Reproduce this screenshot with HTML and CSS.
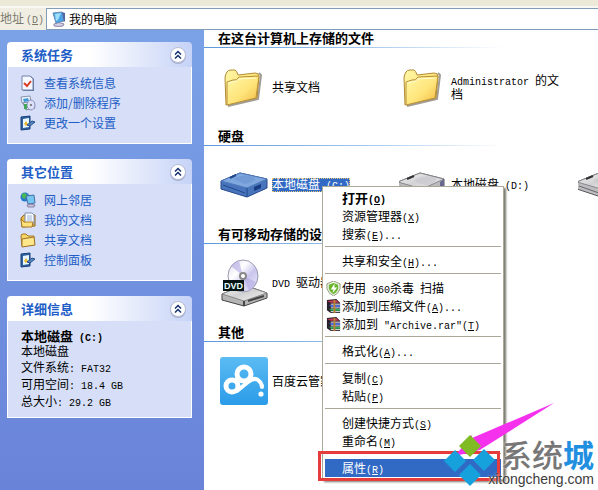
FILE: index.html
```html
<!DOCTYPE html>
<html lang="zh-CN">
<head>
<meta charset="utf-8">
<title>我的电脑</title>
<link rel="stylesheet" href="styles.css">
</head>
<body>
<svg class="defs" aria-hidden="true">
  <defs>
    <linearGradient id="gold" x1="0" y1="0" x2="1" y2="1"><stop offset="0" stop-color="#fff8a8"/><stop offset=".55" stop-color="#ffe47a"/><stop offset="1" stop-color="#f0b63c"/></linearGradient>
    <linearGradient id="steel" x1="0" y1="0" x2="1" y2="1"><stop offset="0" stop-color="#f4f4f4"/><stop offset=".5" stop-color="#d2d2d4"/><stop offset="1" stop-color="#f2f2f2"/></linearGradient>
    <linearGradient id="disc" x1="0" y1="0" x2="1" y2="1"><stop offset="0" stop-color="#d9d9ee"/><stop offset=".35" stop-color="#fff"/><stop offset=".6" stop-color="#c9c6ee"/><stop offset="1" stop-color="#eeeef8"/></linearGradient>
    <linearGradient id="sky" x1="0" y1="0" x2="0" y2="1"><stop offset="0" stop-color="#5bbcf3"/><stop offset="1" stop-color="#2b9be8"/></linearGradient>
    <symbol id="folder" viewBox="0 0 48 48">
      <path d="M8 43 38 36 41 12 39 10" fill="none" stroke="#77736a" stroke-width="2" opacity=".7"/>
      <path d="M5 15Q5 12 7 9Q8 7 11 7L15 7Q17 8 18 12L35 10Q39 10 39 13L37 35 6 42Z" fill="url(#gold)" stroke="#b28b35"/>
      <path d="M7 19 13 17Q17 18 19 14L39 13 36 35 7 42Z" fill="url(#gold)" stroke="#b79038"/>
      <path d="M8 20 13 19Q17 19 19 16L36 15" fill="none" stroke="#fffbd0"/>
    </symbol>
    <symbol id="disk" viewBox="0 0 48 48">
      <path d="M-1 21 21 12 45 18 45 27 23 36 -1 28Z" fill="#bcbcbe" stroke="#58585c"/>
      <path d="M-1 21 21 12 45 18 23 28Z" fill="url(#steel)" stroke="#88888c"/>
      <path d="M15 20Q23 13 36 17Q40 20 28 25" fill="#c9c9ce" opacity=".7"/>
      <path d="M23 28V36M1 25 21 32M26 32 42 25" stroke="#68686e" fill="none"/>
      <path d="M8 18 15 15" stroke="#333" stroke-width="2"/>
      <path d="M41 21 45 18V26L41 28Z" fill="#67678f"/>
    </symbol>
    <symbol id="disk-blue" viewBox="0 0 48 48">
      <path d="M1 20 20 12 47 18 47 27 27 36 1 28Z" fill="#4774bb" stroke="#24488c"/>
      <path d="M1 20 20 12 47 18 27 27Z" fill="#80a8df" stroke="#4f78b8"/>
      <path d="M13 18Q23 12 34 16Q38 20 25 23Z" fill="#739bd6"/>
      <path d="M27 27V36M3 24 25 32" stroke="#23498e" fill="none"/>
      <path d="M34 26 41 23V27L34 30Z" fill="#183c82"/><path d="M10 17 16 14" stroke="#24488c" stroke-width="2"/>
    </symbol>
    <symbol id="dvd" viewBox="0 0 48 48">
      <path d="M2 35 24 26 47 34 47 39 24 47 2 41Z" fill="#b5b5b5" stroke="#444"/>
      <path d="M2 35 24 26 47 34 24 42Z" fill="url(#steel)" stroke="#888"/>
      <path d="M24 42V47M28 42 44 37" stroke="#444" stroke-width="2"/>
      <ellipse cx="23" cy="17" rx="15" ry="16" fill="url(#disc)" stroke="#9a9ab0"/>
      <path d="M23 17 11 7Q14 3 19 2ZM23 17 36 23Q34 29 29 32Z" fill="#b3a8e2" opacity=".6"/>
      <circle cx="23" cy="17" r="4" fill="#888"/><circle cx="23" cy="17" r="2" fill="#fff"/>
      <path d="M3 21H24V32H3Z" fill="#061414"/>
      <text x="4" y="30" class="dvd-text" fill="#e8ffff">DVD</text>
    </symbol>
    <symbol id="baidu" viewBox="0 0 48 48">
      <rect width="48" height="48" rx="3" fill="url(#sky)"/>
      <g fill="none" stroke="#fff"><circle cx="24" cy="17" r="7" stroke-width="5"/><circle cx="12" cy="29" r="6" stroke-width="5"/><path d="M17 34 28 25Q34 20 38 23Q42 26 42 30" stroke-width="4" stroke-linecap="round"/></g>
      <circle cx="41" cy="37" r="2.600" fill="#fff"/>
    </symbol>
    <symbol id="chevrons" viewBox="0 0 18 18">
      <circle cx="9" cy="10" r="8" fill="#8288a8" opacity=".5"/>
      <circle cx="9" cy="9" r="7.500" fill="#fff" stroke="#b8bdd6"/>
      <path d="M6 8.500 9 5.500 12 8.500M6 12.500 9 9.500 12 12.500" fill="none" stroke="#15306e" stroke-width="1.500"/>
    </symbol>
    <symbol id="computer" viewBox="0 0 16 16">
      <path d="M3 13Q8 10 13 13L12 15Q8 16 3 15Z" fill="#d5cfe4" stroke="#8b8aa6"/>
      <path d="M2 2 11 1 13 10 5 12Z" fill="#4aa5e6" stroke="#6b8cb8"/><path d="M4 3 10 2 7 9 5 10Z" fill="#9fe0fb"/><path d="M11 1 14 2V10L13 11Z" fill="#4d67a0"/>
    </symbol>
    <symbol id="doc-check" viewBox="0 0 16 16">
      <path d="M3 1H11L14 4V16H3Z" fill="#68779a"/><path d="M2 1H10L13 4V15H2Z" fill="#f6f9ff" stroke="#7184ad"/>
      <path d="M4 8 7 11 11 6" fill="none" stroke="#db3b20" stroke-width="2"/>
    </symbol>
    <symbol id="programs" viewBox="0 0 16 16">
      <path d="M1 2 10 1 11 7 2 8Z" fill="#edf2fa" stroke="#8793ad"/><path d="M3 4 8 3 9 6 4 7Z" fill="#3d9bd9"/>
      <path d="M3 8 12 6 15 13 6 15Z" fill="#eee" stroke="#7c89a5"/>
      <ellipse cx="11" cy="10" rx="4" ry="5" fill="#dcdff9" stroke="#8a8dbb"/><circle cx="11" cy="10" r="1" fill="#666"/><path d="M4 9H7V14H4Z" fill="#40a856"/>
    </symbol>
    <symbol id="panel" viewBox="0 0 16 16">
      <path d="M1 2 10 1V14L1 15Z" fill="#2f629f" stroke="#183f78"/><path d="M3 4 9 3V12L3 13Z" fill="#e8f7ff"/>
      <path d="M4 9 6 6 8 9 6 11Z" fill="#e9b829"/><path d="M7 10 12 6 15 7 10 11Z" fill="#5686bf" stroke="#244f89"/>
    </symbol>
    <symbol id="network" viewBox="0 0 16 16">
      <circle cx="5" cy="5" r="4.500" fill="#2878ce"/><path d="M2 2Q6 0 7 3L5 7Q1 6 2 2Z" fill="#49b950"/>
      <path d="M6 4 14 3 15 11 8 12Z" fill="#76c6f2" stroke="#4870a5"/><path d="M7 13Q11 11 15 13L14 15H8Z" fill="#cbc3df" stroke="#8580a2"/>
    </symbol>
    <symbol id="documents" viewBox="0 0 16 16">
      <path d="M1 6 4 3H15V14L2 15Z" fill="#e7b94a" stroke="#94651b"/><path d="M5 1H12L14 3V12H5Z" fill="#f8fbff" stroke="#7c91b2"/><path d="M7 4H12M7 6H12M7 8H12" stroke="#9cb4d5"/>
      <path d="M1 7 4 10H13L12 15H2Z" fill="#ffe07a" stroke="#a97a26"/>
    </symbol>
    <symbol id="small-folder" viewBox="0 0 16 16">
      <path d="M1 4Q1 2 3 2H6L8 4H14V13L2 14Z" fill="#f6d568" stroke="#a87922"/><path d="M2 7 14 5 15 13 2 15Z" fill="#ffe88a" stroke="#9c712a"/>
    </symbol>
    <symbol id="shield" viewBox="0 0 16 16">
      <path d="M8 0 15 3V8Q14 13 8 16Q2 13 1 8V3Z" fill="#f1f4ea" stroke="#899875"/><path d="M8 2 13 4V8Q12 12 8 14Q4 12 3 8V4Z" fill="#69b52d"/><path d="M9 3 5 9H8L7 13 12 7H9Z" fill="#fff"/>
    </symbol>
    <symbol id="rar" viewBox="0 0 16 16">
      <path d="M1 1 11 0 15 4V15H5L1 12Z" fill="#271e28"/>
      <path d="M1 2 11 1 14 4H5Z" fill="#c23a58"/><path d="M2 6 5 8H14V7H5Z" fill="#4169ca"/><path d="M2 10 5 12H14V11H5Z" fill="#37a557"/>
      <path d="M5 5.500H15M5 9.500H15M5 13.500H15" stroke="#fff"/><path d="M5 7.500H15" stroke="#4a6fe0" stroke-width="2"/><path d="M5 11.500H15" stroke="#2fae5c" stroke-width="2"/><path d="M8 1 10 1V15H8Z" fill="#b68135"/>
    </symbol>
  </defs>
</svg>

<div class="toolbar"></div>
<header class="address">
  <label for="location">地址<span class="en">(<u>D</u>)</span></label>
  <div class="address-box"><svg class="icon"><use href="#computer"/></svg><input id="location" type="text" value="我的电脑"></div>
</header>

<div class="window">
  <aside class="sidebar">
    <section class="panel">
      <header><h2>系统任务</h2><button aria-label="折叠系统任务"><svg><use href="#chevrons"/></svg></button></header>
      <nav>
        <a href="#"><svg class="icon"><use href="#doc-check"/></svg>查看系统信息</a>
        <a href="#"><svg class="icon"><use href="#programs"/></svg>添加/删除程序</a>
        <a href="#"><svg class="icon"><use href="#panel"/></svg>更改一个设置</a>
      </nav>
    </section>
    <section class="panel">
      <header><h2>其它位置</h2><button aria-label="折叠其它位置"><svg><use href="#chevrons"/></svg></button></header>
      <nav>
        <a href="#"><svg class="icon"><use href="#network"/></svg>网上邻居</a>
        <a href="#"><svg class="icon"><use href="#documents"/></svg>我的文档</a>
        <a href="#"><svg class="icon"><use href="#small-folder"/></svg>共享文档</a>
        <a href="#"><svg class="icon"><use href="#panel"/></svg>控制面板</a>
      </nav>
    </section>
    <section class="panel">
      <header><h2>详细信息</h2><button aria-label="折叠详细信息"><svg><use href="#chevrons"/></svg></button></header>
      <div class="details">
        <div class="drive"><strong>本地磁盘<span class="en"> (C:)</span></strong><span>本地磁盘</span></div>
        <p>文件系统<span class="en">: FAT32</span></p>
        <p>可用空间<span class="en">: 18.4 GB</span></p>
        <p>总大小<span class="en">: 29.2 GB</span></p>
      </div>
    </section>
  </aside>

  <main class="content">
    <section class="group">
      <h2>在这台计算机上存储的文件</h2>
      <div class="items">
        <div class="item"><svg><use href="#folder"/></svg><span>共享文档</span></div>
        <div class="item"><svg><use href="#folder"/></svg><span><span class="en">Administrator </span>的文档</span></div>
      </div>
    </section>
    <section class="group">
      <h2>硬盘</h2>
      <div class="items">
        <div class="item"><svg><use href="#disk-blue"/></svg><span class="selected">本地磁盘<span class="en"> (C:)</span></span></div>
        <div class="item"><svg><use href="#disk"/></svg><span>本地磁盘<span class="en"> (D:)</span></span></div>
        <div class="item"><svg><use href="#disk"/></svg></div>
      </div>
    </section>
    <section class="group">
      <h2>有可移动存储的设备</h2>
      <div class="items">
        <div class="item"><svg><use href="#dvd"/></svg><span><span class="en">DVD </span>驱动器</span></div>
      </div>
    </section>
    <section class="group">
      <h2>其他</h2>
      <div class="items">
        <div class="item"><svg><use href="#baidu"/></svg><span>百度云管家</span></div>
      </div>
    </section>

    <div class="menu" role="menu">
      <button role="menuitem" class="default">打开<span class="en">(<u>O</u>)</span></button>
      <button role="menuitem">资源管理器<span class="en">(<u>X</u>)</span></button>
      <button role="menuitem">搜索<span class="en">(<u>E</u>)...</span></button>
      <hr>
      <button role="menuitem">共享和安全<span class="en">(<u>H</u>)...</span></button>
      <hr>
      <button role="menuitem" class="with-icon"><svg><use href="#shield"/></svg><span>使用<span class="en"> 360</span>杀毒<span class="en"> </span>扫描</span></button>
      <button role="menuitem" class="with-icon"><svg><use href="#rar"/></svg><span>添加到压缩文件<span class="en">(<u>A</u>)...</span></span></button>
      <button role="menuitem" class="with-icon"><svg><use href="#rar"/></svg><span>添加到<span class="en"> "Archive.rar"(<u>T</u>)</span></span></button>
      <hr>
      <button role="menuitem">格式化<span class="en">(<u>A</u>)...</span></button>
      <hr>
      <button role="menuitem">复制<span class="en">(<u>C</u>)</span></button>
      <button role="menuitem">粘贴<span class="en">(<u>P</u>)</span></button>
      <hr>
      <button role="menuitem">创建快捷方式<span class="en">(<u>S</u>)</span></button>
      <button role="menuitem">重命名<span class="en">(<u>M</u>)</span></button>
      <hr>
      <button role="menuitem" class="active">属性<span class="en">(<u>R</u>)</span></button>
      <div class="highlight"></div>
    </div>
  </main>
</div>

<div class="watermark">
  <svg class="marks" viewBox="0 0 116 86" aria-hidden="true">
    <path d="M112 0 30 35V32L13 53 38 47 41 45Z" fill="#f531ee"/>
    <path d="M28 32 39 43 28 54 17 43Z" fill="#80bb24"/>
    <path d="M13 47 24 58 13 69 2 58Z" fill="#16a0dc"/>
    <path d="M42 46 53 57 42 68 31 57Z" fill="#16a0dc"/>
    <path d="M28 61 39 72 28 83 17 72Z" fill="#16a0dc"/>
  </svg>
  <div class="brand">系统<b>城</b></div>
  <div class="site">xitongcheng.com</div>
</div>
</body>
</html>
```
FILE: styles.css
```css
* { box-sizing: border-box; }

body {
  margin: 0;
  height: 100vh;
  display: flex;
  flex-direction: column;
  position: relative;
  overflow: hidden;
  background: #fff;
  color: #000;
  font: 12px/18px "Noto Sans CJK SC", sans-serif;
}

h2, p { margin: 0; }
button { font: inherit; border: 0; padding: 0; background: none; }

.defs { position: absolute; width: 0; height: 0; }
.dvd-text { font: bold 9px "Liberation Sans", sans-serif; }

.en {
  font-family: "Liberation Mono", monospace;
  font-size: 10px;
  line-height: 1;
  white-space: pre-wrap;
}

.icon { width: 16px; height: 16px; flex: none; }

.toolbar {
  height: 8px;
  flex: none;
  background: #ece9d8;
  border-bottom: 2px solid #f8f7f1;
}

.address {
  display: flex;
  height: 22px;
  flex: none;
  background: #f0eee2;
}

.address label {
  width: 46px;
  flex: none;
  display: flex;
  align-items: baseline;
  gap: 2px;
  color: #7c7a6e;
  line-height: 20px;
  white-space: nowrap;
}

.address-box {
  flex: 1;
  display: flex;
  align-items: center;
  gap: 2px;
  padding-left: 4px;
  background: #fff;
  border: 1px solid #7f9db9;
  border-right: 0;
}

.address-box input {
  flex: 1;
  min-width: 0;
  border: 0;
  padding: 0;
  outline: 0;
  background: none;
  color: #000;
  font: inherit;
}

.window { flex: 1; min-height: 0; display: flex; }

.sidebar {
  width: 204px;
  flex: none;
  padding: 12px 12px 0 7px;
  display: flex;
  flex-direction: column;
  gap: 15px;
  background: linear-gradient(#7ba2e7, #6983d9);
}

.panel header {
  height: 25px;
  display: flex;
  align-items: center;
  justify-content: space-between;
  padding: 0 5px 0 14px;
  border-radius: 4px 4px 0 0;
  background: linear-gradient(90deg, #fff 45%, #c6d3f7);
}

.panel h2 { font-size: 13px; line-height: 18px; color: #215dc6; }
.panel button { width: 18px; height: 18px; }
.panel button svg { display: block; width: 18px; height: 18px; }

.panel nav, .details {
  background: #d6dff7;
  border: 1px solid #fff;
  border-top: 0;
}

.panel nav { padding: 6px 12px 10px; }

.panel a {
  display: flex;
  align-items: center;
  gap: 8px;
  height: 20px;
  color: #215dc6;
  text-decoration: none;
}

.details { padding: 8px 13px; line-height: 17px; }
.drive { display: grid; line-height: 14px; }
.drive strong { font-size: 13px; }

.content {
  flex: 1;
  min-width: 0;
  position: relative;
}

.group h2 {
  height: 18px;
  padding-left: 14px;
  font-size: 13px;
  line-height: 16px;
  background: linear-gradient(90deg, #5c96dc, #a5c9ef 55%, #fff) 0 100% / 300px 1px no-repeat;
}

.items {
  display: flex;
  height: 80px;
  padding: 0 0 2px 16px;
  overflow: hidden;
}

.item {
  width: 179px;
  flex: none;
  display: flex;
  align-items: center;
  gap: 4px;
  padding-right: 12px;
  line-height: 12px;
}

.item svg { width: 48px; height: 48px; flex: none; overflow: visible; }

.selected {
  color: #fff;
  background: #316ac5;
  outline: 1px dotted #e8c878;
  outline-offset: -1px;
  white-space: nowrap;
}

.menu {
  position: absolute;
  left: 118px;
  top: 156px;
  width: 182px;
  padding: 2px;
  background: #fff;
  border: 1px solid #aca899;
  box-shadow: 2px 2px 2px #77776f;
}

.menu button {
  display: block;
  width: 100%;
  height: 18px;
  padding-left: 17px;
  text-align: left;
  white-space: nowrap;
  line-height: 18px;
}

.menu .default { font-weight: bold; font-size: 13px; }
.menu .with-icon { display: flex; align-items: center; gap: 1px; padding-left: 1px; }
.menu .with-icon svg { width: 15px; height: 15px; flex: none; }
.menu .with-icon .en { white-space: pre; }
.menu .active { background: #316ac5; color: #fff; }

.menu hr {
  height: 1px;
  margin: 3px 0 5px;
  border: 0;
  background: #aca899;
}

.highlight {
  position: absolute;
  left: -5px;
  right: 3px;
  bottom: -2px;
  height: 30px;
  border: 3px solid #e63c3c;
}

.watermark {
  position: absolute;
  right: 0;
  bottom: 0;
  width: 156px;
  height: 88px;
}

.marks { position: absolute; left: 0; top: 1px; width: 116px; height: 86px; }

.brand, .site {
  position: absolute;
  right: 4px;
  white-space: nowrap;
  text-shadow: 0 0 2px #fff;
}

.brand { bottom: 20px; font-size: 31px; line-height: 32px; font-weight: 500; color: #777; }
.brand b { color: #218fe0; font-weight: bold; }
.site { bottom: 2px; font: 14px/18px "Liberation Sans", sans-serif; color: #3c3c3c; }
```
